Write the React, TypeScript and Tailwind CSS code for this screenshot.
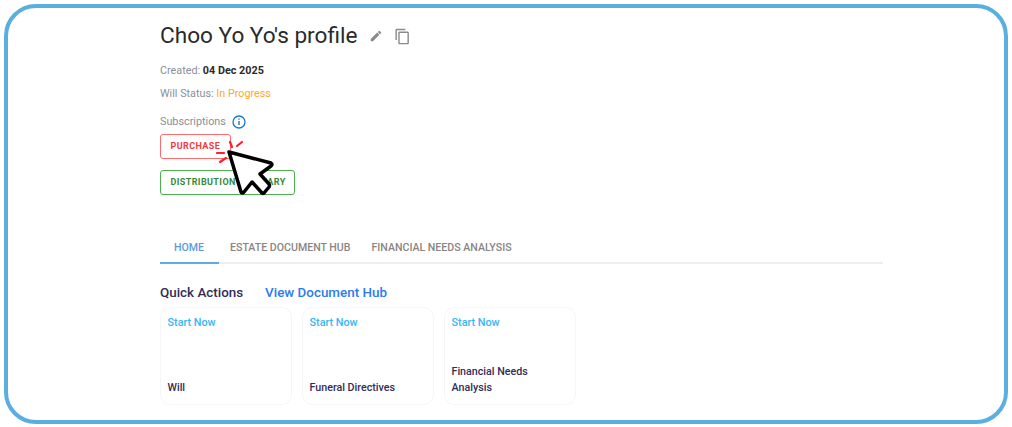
const CARDS = [
  { title: 'Will' },
  { title: 'Funeral Directives' },
  { title: 'Financial Needs Analysis' },
];

function CursorOverlay() {
  return (
    <svg className="absolute left-[210px] top-[134px]" width="75" height="70" viewBox="0 0 75 70" fill="none">
      <g stroke="#ff1f2d" strokeWidth="2.2" strokeLinecap="round">
        <path d="M20 8 L22 13" />
        <path d="M32 8 L27 12" />
        <path d="M7 19 L14 19" />
        <path d="M10 28 L16 24" />
      </g>
      <path
        d="M19 18 L61 29 Q63 30 61 32 L50 40 L59 50 Q60 52 59 53 L54 59 Q53 60 52 59 L42 48 L34 58 Q32 60 31 58 Z"
        fill="#fff"
        stroke="#000"
        strokeWidth="3.5"
        strokeLinejoin="round"
      />
    </svg>
  );
}

export default function App() {
  return (
    <div className="relative w-[1012px] h-[427px] bg-white pl-1 pr-1 pt-1 pb-[3px] font-['Roboto',sans-serif] overflow-hidden">
      <div className="h-full rounded-[32px] border-4 border-[#5aaee0] pl-[152px] pr-[121px] overflow-hidden">
        <div className="flex items-center h-[24px] mt-[16px]">
          <h1 className="text-[22.6px] leading-[24px] text-[#2a2a2a]">Choo Yo Yo's profile</h1>
          <svg className="ml-[12px]" width="14" height="14" viewBox="0 0 24 24" fill="#8a8a8a">
            <path d="M3 17.25V21h3.75L17.81 9.94l-3.75-3.75L3 17.25zM20.71 7.04a1 1 0 0 0 0-1.41l-2.34-2.34a1 1 0 0 0-1.41 0l-1.83 1.83 3.75 3.75 1.83-1.83z" />
          </svg>
          <svg className="ml-[11px]" width="17" height="17" viewBox="0 0 24 24" fill="#8a8a8a">
            <path d="M16 1H4c-1.1 0-2 .9-2 2v14h2V3h12V1zm3 4H8c-1.1 0-2 .9-2 2v14c0 1.1.9 2 2 2h11c1.1 0 2-.9 2-2V7c0-1.100-.9-2-2-2zm0 16H8V7h11v14z" />
          </svg>
        </div>

        <p className="mt-[16px] text-[10.8px] leading-[14px] text-[#8a8f98]">
          Created: <span className="font-bold text-[#2a2a2a]">04 Dec 2025</span>
        </p>
        <p className="mt-[9px] text-[10.8px] leading-[14px] text-[#8a8f98]">
          Will Status: <span className="text-[#ffa726]">In Progress</span>
        </p>
        <div className="flex items-center mt-[13px] h-[16px] text-[10.8px] text-[#8a8f98]">
          Subscriptions
          <svg className="ml-[6px]" width="14" height="14" viewBox="0 0 14 14" fill="none">
            <circle cx="7" cy="7" r="6" stroke="#1976d2" strokeWidth="1.3" />
            <path d="M7 6v4M7 3.600v1.200" stroke="#1976d2" strokeWidth="1.4" />
          </svg>
        </div>

        <div className="flex flex-col items-start gap-[11px] mt-[4px]">
          <button className="h-[25px] w-[71px] rounded-[3px] border border-[#ff6b6b] pl-[9.5px] text-left text-[9px] font-bold tracking-[0.4px] text-[#f5393f]">
            PURCHASE
          </button>
          <button className="h-[25px] w-[135px] rounded-[3px] border border-[#4caf50] pl-[9.5px] text-left text-[9px] font-bold tracking-[0.4px] text-[#37893a] whitespace-nowrap">
            DISTRIBUTION SUMMARY
          </button>
        </div>

        <div className="flex mt-[35px] h-[34px] border-b-2 border-[#eceff1] text-[10.6px] font-medium">
          <div className="h-[34px] w-[59px] pt-[3px] pr-[1px] border-b-2 border-[#64a8e8] flex items-center justify-center text-[#5b9bdf]">HOME</div>
          <div className="h-[32px] pt-[4px] flex items-center ml-[11px] text-[#8a8583]">ESTATE DOCUMENT HUB</div>
          <div className="h-[32px] pt-[4px] flex items-center ml-[21px] text-[#8a8583]">FINANCIAL NEEDS ANALYSIS</div>
        </div>

        <div className="flex items-center mt-[20px] h-[18px]">
          <span className="text-[13.400px] font-medium text-[#332c58]">Quick Actions</span>
          <span className="ml-[22px] text-[13.400px] font-medium text-[#2a7cf0]">View Document Hub</span>
        </div>

        <div className="flex gap-[10px] mt-[5px]">
          {CARDS.map((c) => (
            <div key={c.title} className="flex flex-col justify-between w-[132px] h-[98px] rounded-[10px] border border-[#f5f6f7] pl-[6.500px] pr-[7px] pt-[7px] pb-[8px]">
              <span className="text-[10.800px] leading-[16px] font-medium text-[#38b6f7]">Start Now</span>
              <span className="text-[10.700px] leading-[16px] font-medium text-[#332c58]">{c.title}</span>
            </div>
          ))}
        </div>
      </div>
      <CursorOverlay />
    </div>
  );
}
